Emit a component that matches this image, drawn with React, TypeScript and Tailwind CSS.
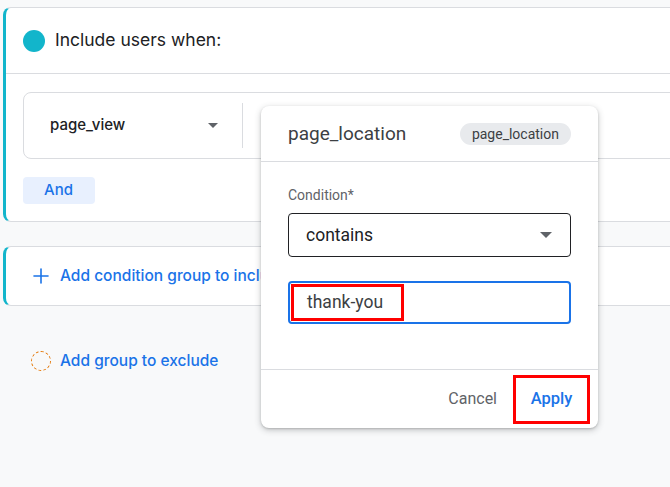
import { Plus } from 'lucide-react';

function Caret({ className }: { className?: string }) {
  return (
    <svg width="10" height="5" viewBox="0 0 10 5" className={className}>
      <path d="M0 0 L10 0 L5 5 Z" fill="currentColor" />
    </svg>
  );
}

function ConditionPopup() {
  return (
    <div className="absolute left-[261px] top-[106px] w-[337px] h-[322px] bg-white rounded-[8px] shadow-[0_2px_6px_rgba(60,64,67,0.3),0_1px_2px_rgba(60,64,67,0.2)] font-['Roboto',sans-serif] flex flex-col">
      <div className="h-[56px] flex items-center justify-between px-[27px] pt-[1px] border-b border-[#dadce0]">
        <span className="text-[19px] text-[#3c4043]">page_location</span>
        <span className="h-[22px] px-[12px] rounded-full bg-[#e8eaed] text-[14px] text-[#3c4043] flex items-center">
          page_location
        </span>
      </div>
      <div className="flex-1 px-[27px] pt-[24px]">
        <div className="text-[14px] text-[#5f6368] leading-[18px]">Condition*</div>
        <div className="mt-[9px] h-[44px] border border-[#202124] rounded-[4px] flex items-center justify-between pl-[17px] pr-[18px]">
          <span className="text-[17.5px] text-[#202124]">contains</span>
          <Caret className="text-[#5f6368] w-[12px] h-[6px]" />
        </div>
        <div className="mt-[24px] h-[43px] border-2 border-[#1a73e8] rounded-[4px] flex items-center">
          <div className="ml-[1px] h-[37px] w-[113px] border-[3px] border-[#ff0000] flex items-center pl-[13px]">
            <span className="text-[17.5px] text-[#3c4043]">thank-you</span>
          </div>
        </div>
      </div>
      <div className="h-[59px] border-t border-[#dadce0] flex items-center justify-end pr-[8px]">
        <span className="text-[16px] text-[#5f6368] mr-[16px]">Cancel</span>
        <div className="w-[77px] h-[49px] border-[3px] border-[#ff0000] flex items-center justify-center">
          <span className="text-[16.5px] text-[#1a73e8] font-medium">Apply</span>
        </div>
      </div>
    </div>
  );
}

export default function App() {
  return (
    <div className="relative w-[670px] h-[487px] overflow-hidden bg-[#f8f9fa] font-['Inter',sans-serif] pt-[7px] pl-[3px]">
      <div className="w-[720px] h-[215px] bg-white border border-[#dadce0] border-l-[3px] border-l-[#12b5cb] rounded-l-[8px]">
        <div className="h-[66px] flex items-center pl-[17px] border-b border-[#dadce0]">
          <div className="w-[22px] h-[22px] rounded-full bg-[#12b5cb]" />
          <span className="ml-[10px] text-[17.5px] text-[#202124]">Include users when:</span>
        </div>
        <div className="pl-[17px] pt-[18px]">
          <div className="w-[720px] h-[67px] border border-[#dadce0] rounded-[8px] flex items-center">
            <span className="pl-[26px] w-[184px] text-[15px] text-[#202124] font-medium">page_view</span>
            <Caret className="text-[#5f6368]" />
            <div className="ml-[24px] w-px h-[45px] bg-[#dadce0]" />
          </div>
          <div className="mt-[18px] w-[72px] h-[27px] rounded-[4px] bg-[#e8f0fe] flex items-center pl-[21px]">
            <span className="text-[15px] text-[#1a73e8] font-medium">And</span>
          </div>
        </div>
      </div>

      <div className="mt-[24px] w-[720px] h-[60px] bg-white border border-[#dadce0] border-l-[3px] border-l-[#12b5cb] rounded-l-[8px] flex items-center pl-[23px]">
        <Plus className="w-[24px] h-[24px] text-[#1a73e8]" strokeWidth={1.6} />
        <span className="ml-[7px] text-[15.5px] text-[#1a73e8] font-medium">Add condition group to include</span>
      </div>

      <div className="mt-[44px] flex items-center pl-[28px] h-[22px]">
        <div className="w-[20px] h-[20px] rounded-full border border-dashed border-[#e37400]" />
        <span className="ml-[9px] text-[15.5px] text-[#1a73e8] font-medium">Add group to exclude</span>
      </div>

      <ConditionPopup />
    </div>
  );
}
